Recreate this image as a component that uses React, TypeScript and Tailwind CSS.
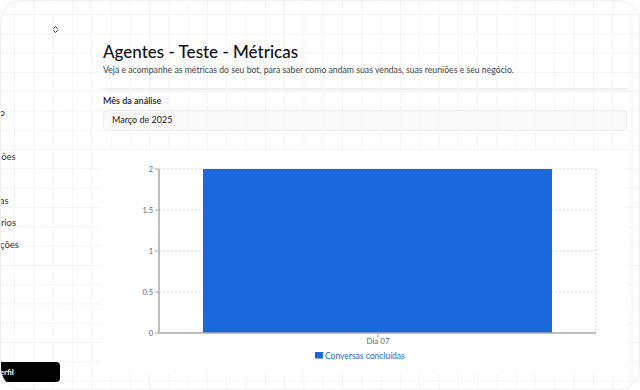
import React from "react";
import { ChevronsUpDown } from "lucide-react";

const navGroups = [
  { title: "", items: ["Histórico"] },
  { title: "Bot", items: ["Conversões"] },
  { title: "Ger", items: ["Perguntas", "Formulários", "Notificações"] },
];

const Sidebar: React.FC = () => {
  return (
    <aside className="relative -ml-[128px] flex h-full w-[190px] shrink-0 flex-col pl-[94px] pr-[3px] text-[9.5px] text-[#333]">
      <div className="mt-[20px] flex h-[16px] items-center justify-between">
        <span className="truncate font-semibold">Bot</span>
        <ChevronsUpDown size={9} strokeWidth={2.5} className="text-[#222]" />
      </div>
      <nav className="mt-[65px] flex flex-col">
        {navGroups.map((group) => (
          <div key={group.title} className="flex flex-col">
            {group.title && (
              <span className="h-[22px] leading-[22px] text-[8px] text-[#999]">{group.title}</span>
            )}
            {group.items.map((item) => (
              <a key={item} className="h-[22px] leading-[22px] whitespace-nowrap">
                {item}
              </a>
            ))}
          </div>
        ))}
      </nav>
      <button className="absolute bottom-[7px] left-[40px] right-[3px] h-[20px] rounded-r-[4px] bg-black pl-[82px] text-left text-[8px] font-bold text-white">
        Perfil
      </button>
    </aside>
  );
};

const Chart: React.FC = () => {
  const top = 18;
  const bottom = 182;
  const left = 58;
  const right = 495;
  const ticks = [0, 0.5, 1, 1.5, 2];
  const yOf = (v: number) => bottom - (v / 2) * (bottom - top);
  const blue = "#1a68dc";

  return (
    <svg width="526" height="222" viewBox="0 0 526 222" className="block">
      {ticks.slice(1).map((t) => (
        <line key={t} x1={left} x2={right} y1={yOf(t)} y2={yOf(t)} stroke="#ccc" strokeDasharray="2 2" strokeWidth="0.8" />
      ))}
      <line x1={right} x2={right} y1={top} y2={bottom} stroke="#ccc" strokeDasharray="2 2" strokeWidth="0.8" />
      <rect x="102" y={top} width="349" height={bottom - top} fill={blue} />
      <line x1={left} x2={left} y1={top} y2={bottom} stroke="#aaa" strokeWidth="1.5" />
      <line x1={left} x2={right} y1={bottom} y2={bottom} stroke="#aaa" strokeWidth="1.5" />
      {ticks.map((t) => (
        <g key={t}>
          <line x1={left - 4} x2={left} y1={yOf(t)} y2={yOf(t)} stroke="#aaa" strokeWidth="1" />
          <text x={left - 6} y={yOf(t) + 2.5} textAnchor="end" fontSize="7.5" fill="#666">
            {t}
          </text>
        </g>
      ))}
      <line x1="277" x2="277" y1={bottom} y2={bottom + 4} stroke="#aaa" strokeWidth="1" />
      <text x="277" y={bottom + 11} textAnchor="middle" fontSize="8" fill="#666">
        Dia 07
      </text>
      <rect x="214" y="201" width="8" height="6.5" fill={blue} />
      <text x="224" y="207.5" fontSize="8.5" fill={blue}>
        Conversas concluídas
      </text>
    </svg>
  );
};

export default function App() {
  return (
    <div className="h-[390px] w-[640px] bg-white">
      <div className="flex h-full w-full overflow-hidden rounded-[22px] border border-[#efefef] bg-white bg-[linear-gradient(to_right,#f3f3f3_1px,transparent_1px),linear-gradient(to_bottom,#f3f3f3_1px,transparent_1px)] bg-[size:19.3px_19.3px] bg-[position:13px_13px] font-['Lato',sans-serif]">
        <Sidebar />
        <main className="ml-[40px] flex w-[524px] shrink-0 flex-col pt-[41px]">
          <h1 className="text-[17px] leading-[20px] font-medium text-[#111]">Agentes - Teste - Métricas</h1>
          <p className="mt-[2px] text-[8.7px] leading-[12px] text-[#444]">
            Veja e acompanhe as métricas do seu bot, para saber como andam suas vendas, suas reuniões e seu negócio.
          </p>
          <div className="mt-[12px] h-[1.5px] bg-[#efefef]" />
          <label className="mt-[5px] text-[9px] leading-[12px] font-semibold text-[#222]">Mês da análise</label>
          <div className="mt-[3px] flex h-[21px] items-center rounded-[4px] border border-[#eeeeee] bg-[#f7f7f7]/80 px-[8px] text-[9px] text-[#222]">
            Março de 2025
          </div>
          <div className="mt-[20px] -ml-[2px] w-[526px] bg-white">
            <Chart />
          </div>
        </main>
      </div>
    </div>
  );
}
